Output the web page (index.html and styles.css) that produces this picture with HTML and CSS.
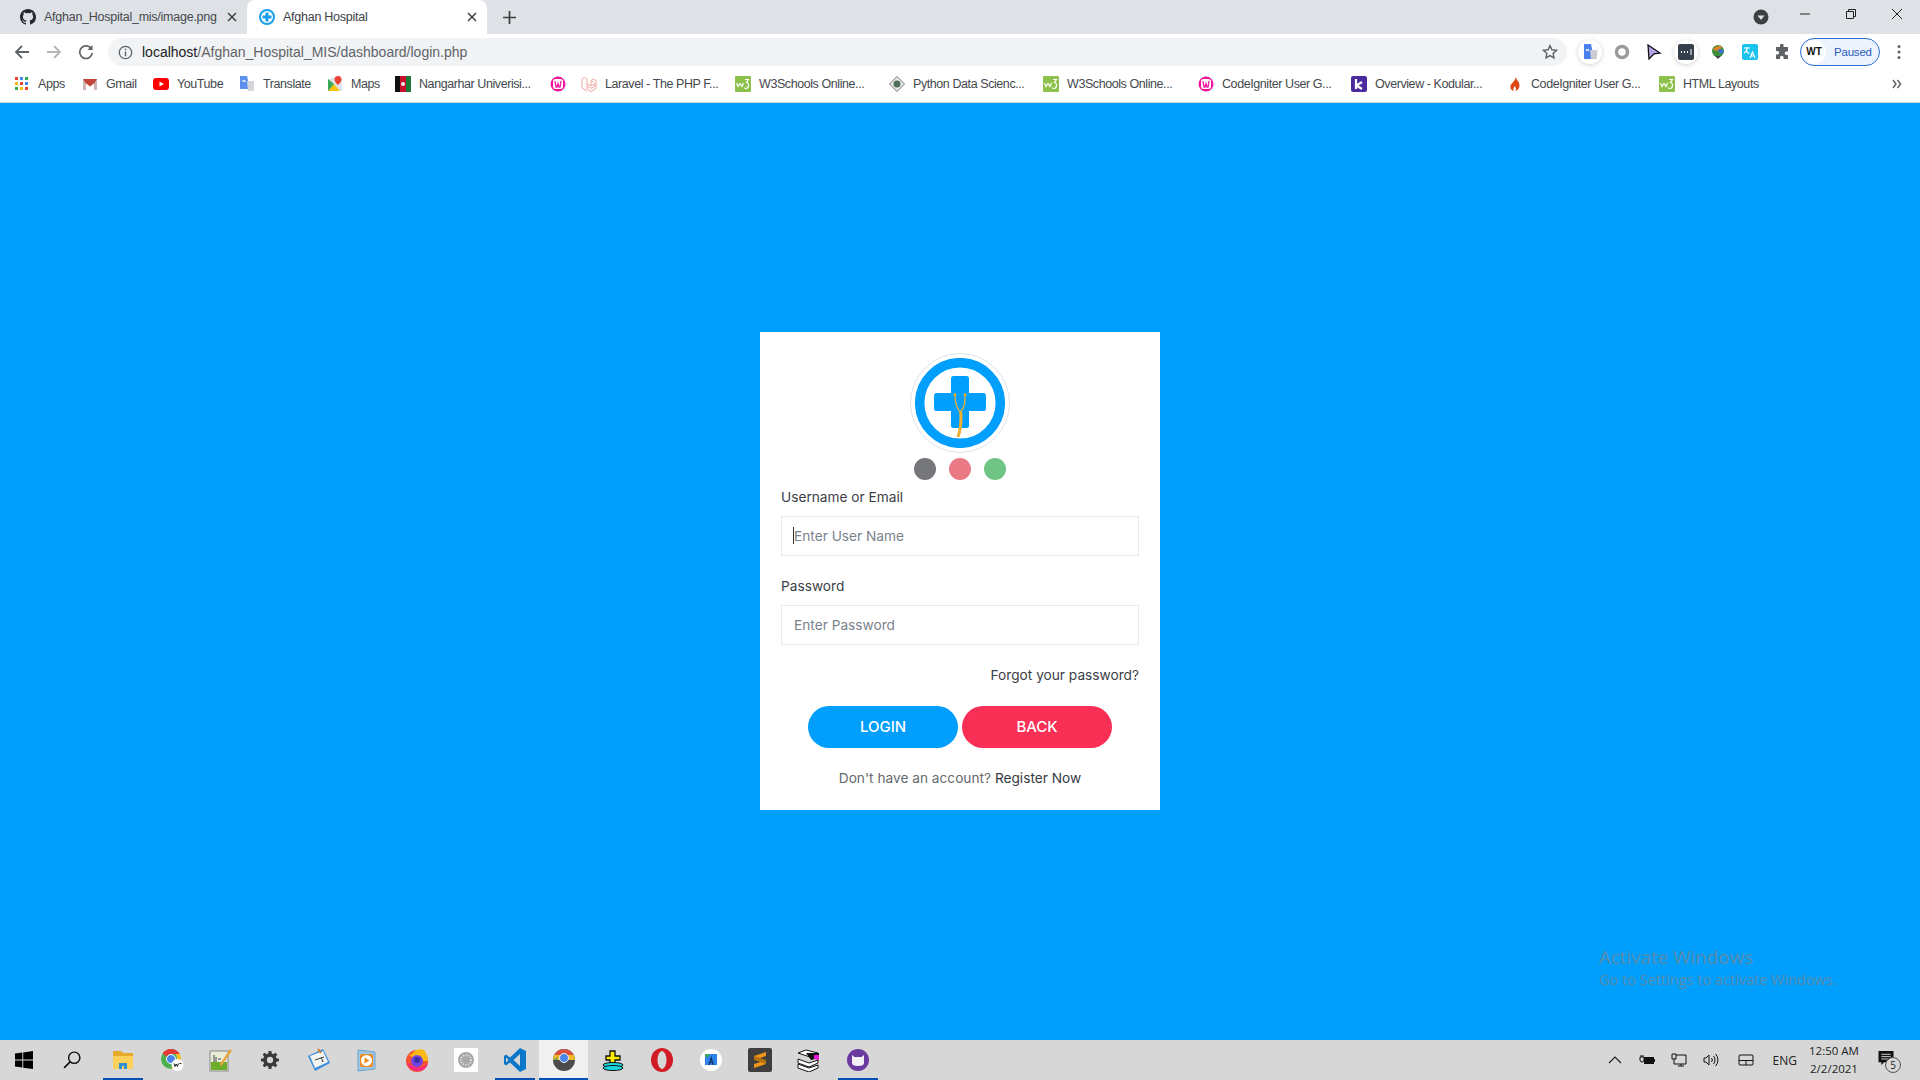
FILE: index.html
```html
<!DOCTYPE html>
<html lang="en">
<head>
    <meta charset="UTF-8">
    <meta name="viewport" content="width=device-width, initial-scale=1.0">
    <title>Afghan Hospital</title>
    <link rel="stylesheet" href="styles.css">
</head>
<body>
<svg class="sprites" width="0" height="0">
    <symbol id="ico-w3" viewBox="0 0 16 16">
        <rect width="16" height="16" rx="1" fill="#8cc14c"/>
        <path d="M1.500 7l1.500 3.500L5 7.500l2 3L8.500 7M10 3.500h3.500l-2 3c2.800 0 2.800 6-.5 6-.8 0-1.300-.3-1.700-.8" fill="none" stroke="#fff" stroke-width="1.200"/>
    </symbol>
    <symbol id="ico-wamp" viewBox="0 0 16 16">
        <circle cx="8" cy="8" r="7.500" fill="#f0169c"/>
        <rect x="3" y="3" width="10" height="10" rx="2.500" fill="#fff"/>
        <path d="M5 5l1 6h1l1-3.500L9 11h1l1-6" fill="none" stroke="#f0169c" stroke-width="1.300"/>
    </symbol>
    <symbol id="ico-close" viewBox="0 0 10 10">
        <path d="M1 1l8 8M9 1l-8 8" stroke="#3c4043" stroke-width="1.500" fill="none"/>
    </symbol>
    <symbol id="ico-logo-small" viewBox="0 0 16 16">
        <circle cx="8" cy="8" r="7" fill="#fff" stroke="#1a9fee" stroke-width="2"/>
        <path d="M6.500 3.500h3v3h3v3h-3v3h-3v-3h-3v-3h3z" fill="#1a9fee"/>
    </symbol>
</svg>

<div class="chrome">
    <div class="tabstrip">
        <div class="tab">
            <svg class="tab-ico" viewBox="0 0 16 16"><path fill="#24292e" d="M8 0C3.580 0 0 3.580 0 8c0 3.540 2.290 6.530 5.470 7.590.4.070.55-.17.55-.38v-1.340c-2.230.49-2.690-1.070-2.690-1.070-.36-.93-.89-1.170-.89-1.170-.73-.5.050-.49.050-.49.8.060 1.230.82 1.230.82.71 1.220 1.870.87 2.330.66.070-.52.28-.87.51-1.070-1.780-.2-3.640-.89-3.640-3.950 0-.87.31-1.590.82-2.150-.08-.2-.36-1.020.08-2.120 0 0 .67-.21 2.200.82a7.600 7.600 0 0 1 4 0c1.530-1.040 2.200-.82 2.200-.82.44 1.100.16 1.920.08 2.120.51.56.82 1.270.82 2.150 0 3.070-1.870 3.750-3.650 3.950.29.25.54.73.54 1.480v2.200c0 .21.15.46.55.38A8 8 0 0 0 16 8c0-4.420-3.580-8-8-8z"/></svg>
            <span class="tab-title">Afghan_Hospital_mis/image.png</span>
            <svg class="tab-close"><use href="#ico-close"/></svg>
        </div>
        <div class="tab tab-active">
            <svg class="tab-ico"><use href="#ico-logo-small"/></svg>
            <span class="tab-title">Afghan Hospital</span>
            <svg class="tab-close"><use href="#ico-close"/></svg>
        </div>
        <svg class="new-tab" viewBox="0 0 12 12"><path d="M6 0v12M0 6h12" stroke="#3c4043" stroke-width="1.600"/></svg>
        <svg class="tab-search" viewBox="0 0 16 16"><circle cx="8" cy="8" r="7.500" fill="#3c4043"/><path d="M4.500 6.500h7L8 11z" fill="#dee1e6"/></svg>
        <div class="win-btns">
            <svg viewBox="0 0 12 12"><path d="M1 6h10" stroke="#222" stroke-width="1"/></svg>
            <svg viewBox="0 0 12 12"><path d="M1.500 3.500h7v7h-7zM3.500 3.500v-2h7v7h-2" fill="none" stroke="#222" stroke-width="1"/></svg>
            <svg viewBox="0 0 12 12"><path d="M1 1l10 10M11 1L1 11" stroke="#222" stroke-width="1"/></svg>
        </div>
    </div>

    <div class="toolbar">
        <svg class="nav-ico" viewBox="0 0 16 16"><path d="M15 8H2M8 2L2 8l6 6" fill="none" stroke="#5f6368" stroke-width="1.800"/></svg>
        <svg class="nav-ico nav-off" viewBox="0 0 16 16"><path d="M1 8h13M8 2l6 6-6 6" fill="none" stroke="#b4b6b9" stroke-width="1.800"/></svg>
        <svg class="nav-ico" viewBox="0 0 16 16"><path d="M13.500 5A6.300 6.300 0 1 0 14.300 9" fill="none" stroke="#5f6368" stroke-width="1.700"/><path d="M14.500 1v5h-5z" fill="#5f6368"/></svg>
        <div class="omnibox">
            <svg class="info-ico" viewBox="0 0 16 16"><circle cx="8" cy="8" r="6.600" fill="none" stroke="#5f6368" stroke-width="1.400"/><path d="M8 7v5M8 4v1.600" stroke="#5f6368" stroke-width="1.500"/></svg>
            <span class="url"><b>localhost</b>/Afghan_Hospital_MIS/dashboard/login.php</span>
            <svg class="star-ico" viewBox="0 0 16 16"><path d="M8 1.600l1.900 4.200 4.600.5-3.400 3.100.9 4.500L8 11.600l-4 2.300.9-4.500L1.500 6.300l4.600-.5z" fill="none" stroke="#5f6368" stroke-width="1.400"/></svg>
        </div>
        <div class="extensions">
            <span class="ext ext-round"><svg viewBox="0 0 16 16"><path d="M2 0h7l3 15H2z" fill="#4a80ec"/><path d="M8 6h7v9H9z" fill="#c9ccd1"/><path d="M4 6h3" stroke="#fff" stroke-width="1.500"/></svg></span>
            <span class="ext"><svg viewBox="0 0 16 16"><circle cx="8" cy="8" r="5.500" fill="none" stroke="#9a9a9a" stroke-width="3.500"/></svg></span>
            <span class="ext"><svg viewBox="0 0 16 16"><path d="M2 1l12 8-6 .8L3 15z" fill="#b9a3e8" stroke="#111" stroke-width="1.300"/></svg></span>
            <span class="ext ext-round"><svg viewBox="0 0 16 16"><rect width="16" height="16" rx="2" fill="#333f4b"/><path d="M3 8h1M6 8h1M9 8h1" stroke="#fff" stroke-width="2"/><path d="M13 5v6" stroke="#fff"/></svg></span>
            <span class="ext"><svg viewBox="0 0 16 16"><circle cx="8" cy="7" r="6" fill="#3d8e3b"/><path d="M3 6c2-4 6-5 9-3l-3 4z" fill="#e6832a"/><path d="M8 5c3 0 6 1 6 3l-4 2z" fill="#3a6fd8"/><path d="M5 12l3 3 3-3z" fill="#444"/></svg></span>
            <span class="ext"><svg viewBox="0 0 16 16"><rect width="16" height="16" rx="2" fill="#19c3ee"/><path d="M2 4h6M5 3v1c0 2-1 4-3 5M4 6c.5 1.500 2 3 3.500 3.500" fill="none" stroke="#fff" stroke-width="1.200"/><path d="M8 14l2.500-6 2.500 6M9 12h3" fill="none" stroke="#fff" stroke-width="1.200"/></svg></span>
            <span class="ext"><svg viewBox="0 0 16 16"><path d="M6 1.500a1.800 1.800 0 0 1 3.600 0V3H14v4.400h-1.500a1.800 1.800 0 0 0 0 3.600H14v4H9.600v-1.500a1.800 1.800 0 0 0-3.600 0V15H2v-4.400h1.300a1.800 1.800 0 0 0 0-3.600H2V3h4z" fill="#5f6368"/></svg></span>
        </div>
        <div class="profile">
            <span class="avatar">WT</span>
            <span class="paused">Paused</span>
        </div>
        <svg class="menu-ico" viewBox="0 0 4 16"><circle cx="2" cy="2.500" r="1.500" fill="#5f6368"/><circle cx="2" cy="8" r="1.500" fill="#5f6368"/><circle cx="2" cy="13.500" r="1.500" fill="#5f6368"/></svg>
    </div>

    <div class="bookmarks">
        <div class="bm">
            <svg class="bm-ico bm-apps" viewBox="0 0 14 14">
                <path d="M0 0h3v3H0z" fill="#ea4335"/><path d="M5 0h3v3H5z" fill="#4285f4"/><path d="M10 0h3v3h-3z" fill="#34a853"/>
                <path d="M0 5h3v3H0z" fill="#fbbc05"/><path d="M5 5h3v3H5z" fill="#ea4335"/><path d="M10 5h3v3h-3z" fill="#4285f4"/>
                <path d="M0 10h3v3H0z" fill="#34a853"/><path d="M5 10h3v3H5z" fill="#fbbc05"/><path d="M10 10h3v3h-3z" fill="#ea4335"/>
            </svg>
            <span>Apps</span>
        </div>
        <div class="bm">
            <svg class="bm-ico" viewBox="0 0 16 16"><path d="M1 3h14v11h-2.500V7L8 10.500 3.500 7v7H1z" fill="#c5443a"/><path d="M1 3v11h2.500V7zM15 3v11h-2.500V7z" fill="#c9b8b4"/></svg>
            <span>Gmail</span>
        </div>
        <div class="bm">
            <svg class="bm-ico" viewBox="0 0 16 16"><rect y="2" width="16" height="12" rx="3" fill="#f00"/><path d="M6.500 5.500v5L11 8z" fill="#fff"/></svg>
            <span>YouTube</span>
        </div>
        <div class="bm">
            <svg class="bm-ico" viewBox="0 0 16 16"><path d="M1 0h7l3 13H1z" fill="#5c8fee"/><path d="M8 5h7v10H9z" fill="#d4d6da"/><path d="M3.500 5h3" stroke="#fff" stroke-width="1.500"/></svg>
            <span>Translate</span>
        </div>
        <div class="bm">
            <svg class="bm-ico" viewBox="0 0 16 16"><path d="M1 3l9-2 5 2v12H1z" fill="#dfe3e8"/><path d="M1 15l6-7 6 7z" fill="#f4c20d"/><path d="M1 3l6 5-6 7z" fill="#3aa757"/><path d="M11 0a3.500 3.500 0 0 1 3.500 3.500C14.500 6 11 9 11 9S7.500 6 7.500 3.500A3.500 3.500 0 0 1 11 0z" fill="#e94335"/></svg>
            <span>Maps</span>
        </div>
        <div class="bm">
            <svg class="bm-ico" viewBox="0 0 16 16"><path d="M0 0h5v16H0z" fill="#111"/><path d="M5 0h6v16H5z" fill="#c8102e"/><path d="M11 0h5v16h-5z" fill="#1a7a36"/><circle cx="8" cy="8" r="2" fill="#eee"/></svg>
            <span>Nangarhar Univerisi...</span>
        </div>
        <div class="bm">
            <svg class="bm-ico"><use href="#ico-wamp"/></svg>
        </div>
        <div class="bm">
            <svg class="bm-ico" viewBox="0 0 16 16"><path d="M1 3l2.500-1.500L6 3v7l4 2.300 4-2.300V7.500l-4 2.300L6.500 8M6 10v3l4 2.500 5-3V4.500L12.500 3 10 4.500 12.500 6M10 4.500v5.300M1 3v9l5 3" fill="none" stroke="#f4a79d" stroke-width="1"/></svg>
            <span>Laravel - The PHP F...</span>
        </div>
        <div class="bm">
            <svg class="bm-ico"><use href="#ico-w3"/></svg>
            <span>W3Schools Online...</span>
        </div>
        <div class="bm">
            <svg class="bm-ico" viewBox="0 0 16 16"><path d="M8 .5L15.500 8 8 15.500.5 8z" fill="#e8e8e8" stroke="#777"/><circle cx="8" cy="8" r="3.500" fill="#4f6e58"/></svg>
            <span>Python Data Scienc...</span>
        </div>
        <div class="bm">
            <svg class="bm-ico"><use href="#ico-w3"/></svg>
            <span>W3Schools Online...</span>
        </div>
        <div class="bm">
            <svg class="bm-ico"><use href="#ico-wamp"/></svg>
            <span>CodeIgniter User G...</span>
        </div>
        <div class="bm">
            <svg class="bm-ico" viewBox="0 0 16 16"><rect width="16" height="16" rx="2" fill="#4b2a9e"/><path d="M5 3v10M11 6L5.500 9.500 11 13" fill="none" stroke="#fff" stroke-width="2.200"/></svg>
            <span>Overview - Kodular...</span>
        </div>
        <div class="bm">
            <svg class="bm-ico" viewBox="0 0 16 16"><path d="M8.500 1c1 3 4 4.500 4 8.500 0 3-2 5-4.500 5.500 1.500-1.500 1.500-3-.5-5-.5 1.500-1.500 2-1 5C4 14.500 3 12 3.500 9.500 4 7.500 8.500 5 8.500 1z" fill="#dd4814"/></svg>
            <span>CodeIgniter User G...</span>
        </div>
        <div class="bm">
            <svg class="bm-ico"><use href="#ico-w3"/></svg>
            <span>HTML Layouts</span>
        </div>
        <svg class="bm-more" viewBox="0 0 10 10"><path d="M1 1l3 4-3 4M5.500 1l3 4-3 4" fill="none" stroke="#5f6368" stroke-width="1.500"/></svg>
    </div>
</div>

<main class="page">
    <div class="login-card">
        <div class="logo">
            <svg viewBox="0 0 90 90" width="90" height="90">
                <circle cx="45" cy="45" r="40.300" fill="#fff" stroke="#009efd" stroke-width="9.500"/>
                <path d="M38.500 18h13a2.500 2.500 0 0 1 2.500 2.500V35h14.500a2.500 2.500 0 0 1 2.500 2.500v13a2.500 2.500 0 0 1-2.500 2.500H54v14.500a2.500 2.500 0 0 1-2.500 2.500h-13a2.500 2.500 0 0 1-2.500-2.500V53H21.500a2.500 2.500 0 0 1-2.500-2.500v-13a2.500 2.500 0 0 1 2.500-2.500H36V20.500a2.500 2.500 0 0 1 2.500-2.500z" fill="#009efd"/>
                <path d="M40 36.500c0 8 .8 13 5.300 17.500 4.500-4.500 4.700-9.500 4.700-17.500" fill="none" stroke="#f2b02e" stroke-width="1.300"/>
                <path d="M45.800 54c.5 9 .5 17-3 25" fill="none" stroke="#f2b02e" stroke-width="3"/>
                <circle cx="40" cy="36.500" r="1.300" fill="#f2b02e"/><circle cx="50" cy="36.500" r="1.300" fill="#f2b02e"/>
            </svg>
        </div>
        <div class="dots">
            <span class="dot dot-gray"></span>
            <span class="dot dot-red"></span>
            <span class="dot dot-green"></span>
        </div>
        <form class="login-form">
            <label class="field">
                <span class="field-label">Username or Email</span>
                <span class="input-wrap">
                    <input type="text" placeholder="Enter User Name">
                    <span class="caret"></span>
                </span>
            </label>
            <label class="field">
                <span class="field-label">Password</span>
                <span class="input-wrap">
                    <input type="password" placeholder="Enter Password">
                </span>
            </label>
            <a class="forgot">Forgot your password?</a>
            <div class="buttons">
                <button type="button" class="btn btn-login">LOGIN</button>
                <button type="button" class="btn btn-back">BACK</button>
            </div>
            <p class="register">Don't have an account? <a>Register Now</a></p>
        </form>
    </div>

    <div class="activate">
        <div class="activate-title">Activate Windows</div>
        <div class="activate-sub">Go to Settings to activate Windows.</div>
    </div>
</main>

<footer class="taskbar">
    <div class="task task-start"><svg viewBox="0 0 16 16"><path d="M0 2.300l6.500-.9v6.200H0zM7.300 1.300L16 0v7.600H7.300zM0 8.400h6.500v6.200L0 13.700zM7.300 8.400H16V16l-8.700-1.200z" fill="#000"/></svg></div>
    <div class="task task-search"><svg viewBox="0 0 16 16"><circle cx="10" cy="6" r="5" fill="none" stroke="#111" stroke-width="1.300"/><path d="M6.300 9.700L1 15" stroke="#111" stroke-width="1.500"/></svg></div>
    <div class="task task-open"><svg class="big" viewBox="0 0 24 24"><path d="M2 3h8l2 2h10v15a1 1 0 0 1-1 1H3a1 1 0 0 1-1-1z" fill="#e9a92c"/><path d="M2 8h20v12a1 1 0 0 1-1 1H3a1 1 0 0 1-1-1z" fill="#fbd15b"/><path d="M8 21v-6h8v6h-3v-3h-2v3z" fill="#2d8fd5"/></svg></div>
    <div class="task"><svg class="big" viewBox="0 0 24 24"><circle cx="11" cy="11" r="10" fill="#4caf50"/><path d="M11 1a10 10 0 0 1 8.700 5H11a5 5 0 0 0-4.300 2.500L2.500 5.500A10 10 0 0 1 11 1z" fill="#e53935"/><path d="M19.700 6A10 10 0 0 1 11 21l4.300-7.500A5 5 0 0 0 15.300 6z" fill="#fbc02d"/><circle cx="11" cy="11" r="4.500" fill="#4a86e8" stroke="#fff"/><circle cx="17.500" cy="17" r="6" fill="#fff"/><path d="M14 15.500l1 3 1.200-2.500 1.200 2.500 1-3M19.500 15.500h2" stroke="#222" fill="none"/></svg></div>
    <div class="task"><svg class="big" viewBox="0 0 24 24"><rect x="1" y="3" width="18" height="20" fill="#e8ecd9" stroke="#888"/><rect x="2" y="14" width="16" height="8" fill="#6cae29"/><path d="M5 7v7M7 9v5M9 11h3" stroke="#444"/><path d="M21 1l2 1.500L13 17l-2 1 .3-2.500z" fill="#e8a33a"/></svg></div>
    <div class="task"><svg viewBox="0 0 20 20"><path d="M8.500 0h3l.5 2.800 1.700.7 2.300-1.600 2.100 2.100-1.600 2.300.7 1.700 2.800.5v3l-2.800.5-.7 1.700 1.600 2.300-2.100 2.100-2.300-1.600-1.700.7-.5 2.800h-3L8 17.200l-1.700-.7L4 18.100 1.900 16l1.600-2.300-.7-1.700L0 11.500v-3L2.800 8l.7-1.700L1.900 4 4 1.900l2.300 1.600L8 2.800zM10 6.500a3.500 3.500 0 1 0 0 7 3.500 3.500 0 0 0 0-7z" fill="#3a3a3a"/></svg></div>
    <div class="task"><svg class="big" viewBox="0 0 24 24"><path d="M1 8L16 1l7 14-15 8z" fill="#3a8fe0"/><path d="M3 8l13-5 5 11-13 6z" fill="#f4f4f0"/><path d="M8 12l9-3M14 9l2 5-1-2" stroke="#444" fill="none"/><path d="M11 1l3 4" stroke="#d9792e" stroke-width="2"/></svg></div>
    <div class="task"><svg class="big" viewBox="0 0 24 24"><path d="M2 2l17 2v17l-17 2z" fill="#9cc7e6" stroke="#6ea4cc"/><rect x="4" y="6" width="13" height="13" fill="#f28a1f" rx="2"/><circle cx="10.500" cy="12.500" r="5.500" fill="#fff"/><path d="M8.500 9.500v6l5-3z" fill="#f28a1f"/></svg></div>
    <div class="task"><svg class="big" viewBox="0 0 24 24"><circle cx="12" cy="13" r="11" fill="#f6502d"/><path d="M3 6c2 1 3 1 4 0 2-4 8-6 12-4 2 2 4 7 4 11H12z" fill="#fcb913"/><circle cx="12" cy="13" r="6" fill="#7542e5"/><circle cx="12" cy="12" r="3" fill="#3a2fa5"/><path d="M2 14c1 6 6 9 11 9 5 0 9-3 10-8-3 4-8 5-12 4-4-1-7-3-9-5z" fill="#f32a7e"/></svg></div>
    <div class="task"><svg class="big" viewBox="0 0 24 24"><rect width="24" height="24" fill="#fff"/><circle cx="12" cy="12" r="8" fill="#a8a8a8"/><circle cx="12" cy="12" r="5" fill="none" stroke="#e8e8e8" stroke-dasharray="1 1.500" stroke-width="2"/></svg></div>
    <div class="task task-open"><svg class="big" viewBox="0 0 24 24"><path d="M17 0l6 3v18l-6 3L7 14.500l-4 3-2-1.500V8l2-1.500 4 3z" fill="#0a78c9"/><path d="M17 6l-6.500 6 6.500 6z" fill="#d6d7d6"/><path d="M3 9.500L5.500 12 3 14.500z" fill="#d6d7d6"/></svg></div>
    <div class="task task-open task-active"><svg class="big" viewBox="0 0 24 24"><circle cx="12" cy="12" r="11" fill="#4b4b4b"/><path d="M12 1a11 11 0 0 1 9.800 6H2.200A11 11 0 0 1 12 1z" fill="#d9503f"/><path d="M21.800 7A11 11 0 0 1 23 12H1a11 11 0 0 1 1.200-5z" fill="#f2b824"/><path d="M1 12h4l1-3z" fill="#58a55c"/><circle cx="12" cy="10" r="4.500" fill="#4a86e8" stroke="#eee"/></svg></div>
    <div class="task"><svg class="big" viewBox="0 0 24 24"><path d="M9 3h5v5h5v4h-5v3H9v-3H5V8h4z" fill="#ffec00" stroke="#111" stroke-width="1.300"/><ellipse cx="12" cy="17" rx="10" ry="2.500" fill="#19d8df" stroke="#111"/><ellipse cx="12" cy="20" rx="10" ry="2.500" fill="#19d8df" stroke="#111"/></svg></div>
    <div class="task"><svg class="big" viewBox="0 0 24 24"><ellipse cx="12" cy="12" rx="11" ry="12" fill="#d21c25"/><ellipse cx="12" cy="12" rx="4.500" ry="9" fill="#d6d7d6"/></svg></div>
    <div class="task"><svg class="big" viewBox="0 0 24 24"><circle cx="12" cy="12" r="11" fill="#fff"/><path d="M6 6h12v11H6z" fill="#2f82ec"/><path d="M6 6h5l-2 3H6z" fill="#3aa757"/><path d="M10 17l2.200-7 2.200 7M11 14.500h2.500" stroke="#10305f" stroke-width="1.200" fill="none"/></svg></div>
    <div class="task"><svg class="big" viewBox="0 0 24 24"><rect width="24" height="24" rx="2" fill="#3e3e3e"/><path d="M18 4L6 8v4l12-4zM18 12L6 16v4l12-4z" fill="#f09617"/><path d="M6 8v4l12 4v-4z" fill="#b5700f"/></svg></div>
    <div class="task"><svg class="big" viewBox="0 0 24 24"><path d="M1 5l8-3 12 3-8 4z" fill="#fff" stroke="#111"/><path d="M9 5h13v5l-8 2z" fill="#111"/><path d="M17 7h5v5l-5-1z" fill="#f013d8"/><path d="M1 11l11 4 9-3v3l-9 4-11-4zM1 16l11 4 9-3v3l-9 4-11-4z" fill="#fff" stroke="#111"/></svg></div>
    <div class="task task-open"><svg class="big" viewBox="0 0 24 24"><circle cx="12" cy="12" r="11" fill="#6b3aa0"/><path d="M6 7l2.500 2h7L18 7v8c0 2-2 3-6 3s-6-1-6-3z" fill="#f2eff6"/></svg></div>

    <div class="tray">
        <svg class="tray-ico" viewBox="0 0 16 16"><path d="M2 11l6-6 6 6" fill="none" stroke="#222" stroke-width="1.200"/></svg>
        <svg class="tray-ico" viewBox="0 0 16 16"><path d="M5 5h10v7H5z" fill="#111"/><path d="M15 7h1v3h-1z" fill="#111"/><path d="M1 5v3a2 2 0 0 0 4 0V5zM2 5V3M4 5V3" fill="none" stroke="#111"/></svg>
        <svg class="tray-ico" viewBox="0 0 16 16"><path d="M5 3h10v9H5M10 12v2M7 14h6M1 2h4v5H1zM3 7v5h2" fill="none" stroke="#111"/></svg>
        <svg class="tray-ico tray-ico-wide" viewBox="0 0 16 16"><path d="M1 6v4h2l3 3V3L3 6zM8.500 6a3 3 0 0 1 0 4M10.500 4a6 6 0 0 1 0 8M12.500 2a8.500 8.500 0 0 1 0 12" fill="none" stroke="#111"/></svg>
        <svg class="tray-ico" viewBox="0 0 16 16"><rect x="1" y="3" width="14" height="10" rx="1" fill="none" stroke="#111"/><path d="M1 8.500h14M8 8.500V13" stroke="#111"/></svg>
        <span class="lang">ENG</span>
        <div class="clock"><span>12:50 AM</span><span>2/2/2021</span></div>
        <div class="notify">
            <svg viewBox="0 0 16 16"><path d="M0 0h16v12H6l-3 3v-3H0z" fill="#111"/><path d="M3 3.500h10M3 6h10M3 8.500h7" stroke="#d6d7d6"/></svg>
            <span class="notify-count">5</span>
        </div>
    </div>
</footer>
</body>
</html>
```

FILE: styles.css
```css
* {
    box-sizing: border-box;
}
html, body {
    height: 100%;
}
body {
    margin: 0;
    display: flex;
    flex-direction: column;
    height: 1080px;
    overflow: hidden;
    font-family: 'Liberation Sans', Arial, sans-serif;
    background-color: #009efd;
    color: #333;
}
.sprites {
    position: absolute;
}

/* browser chrome */
.chrome {
    flex: none;
    background-color: #fff;
}
.tabstrip {
    display: flex;
    align-items: center;
    height: 34px;
    background-color: #dee1e6;
}
.tab {
    display: flex;
    align-items: center;
    width: 247px;
    height: 34px;
    padding-left: 20px;
    font-size: 12.5px;
    letter-spacing: -0.25px;
    color: #45494d;
}
.tab-active {
    width: 240px;
    padding-left: 12px;
    background-color: #fff;
    border-radius: 8px 8px 0 0;
    color: #3c4043;
}
.tab-ico {
    flex: none;
    width: 16px;
    height: 16px;
    margin-right: 8px;
}
.tab-title {
    flex: 1;
    overflow: hidden;
    white-space: nowrap;
}
.tab-close {
    flex: none;
    width: 10px;
    height: 10px;
    margin: 0 10px 0 8px;
}
.new-tab {
    flex: none;
    width: 13px;
    height: 13px;
    margin-left: 16px;
}
.tab-search {
    flex: none;
    width: 16px;
    height: 16px;
    margin-left: auto;
}
.win-btns {
    display: flex;
    align-items: center;
    gap: 34px;
    height: 28px;
    margin: 0 17px 6px 30px;
}
.win-btns svg {
    width: 12px;
    height: 12px;
}
.toolbar {
    display: flex;
    align-items: center;
    height: 36px;
    padding-left: 14px;
}
.nav-ico {
    flex: none;
    width: 16px;
    height: 16px;
    margin-right: 16px;
}
.omnibox {
    flex: none;
    display: flex;
    align-items: center;
    width: 1459px;
    height: 28px;
    margin-left: -2px;
    padding: 0 10px;
    border-radius: 14px;
    background-color: #f1f3f4;
}
.info-ico {
    flex: none;
    width: 15px;
    height: 15px;
}
.url {
    flex: 1;
    margin-left: 9px;
    font-size: 14px;
    color: #5f6368;
}
.url b {
    font-weight: 400;
    color: #202124;
}
.star-ico {
    flex: none;
    width: 16px;
    height: 16px;
    margin-right: -1px;
}
.extensions {
    display: flex;
    align-items: center;
    gap: 16px;
    margin-left: 15px;
}
.ext {
    display: flex;
    align-items: center;
    justify-content: center;
    width: 16px;
    height: 16px;
}
.ext svg {
    width: 16px;
    height: 16px;
}
.ext-round {
    border-radius: 50%;
    box-shadow: 0 0 0 4px #fff, 0 1px 5px 4px rgba(0,0,0,0.18);
}
.profile {
    flex: none;
    display: flex;
    align-items: center;
    width: 80px;
    height: 28px;
    margin-left: 10px;
    border: 1px solid #2f6fd6;
    border-radius: 14px;
    background-color: #edf3fd;
}
.avatar {
    width: 24px;
    height: 24px;
    margin-left: 1px;
    border-radius: 50%;
    background-color: #fff;
    font-size: 10px;
    font-weight: 700;
    line-height: 24px;
    text-align: center;
    color: #111;
}
.paused {
    margin-left: 8px;
    font-size: 11.5px;
    letter-spacing: -0.2px;
    color: #2c5cc0;
}
.menu-ico {
    flex: none;
    width: 4px;
    height: 16px;
    margin-left: 17px;
}
.bookmarks {
    display: grid;
    grid-template-columns: 67px 71px 86px 88px 68px 155px 31px 154px 154px 154px 155px 153px 156px 152px 234px 10px;
    align-items: center;
    height: 33px;
    padding: 0 0 4px 15px;
    border-bottom: 1px solid #d3d6da;
    font-size: 12.5px;
    letter-spacing: -0.42px;
    color: #45494d;
}
.bm {
    display: flex;
    align-items: center;
    white-space: nowrap;
}
.bm-ico {
    flex: none;
    width: 16px;
    height: 16px;
    margin-right: 8px;
}
.bm-apps {
    width: 14px;
    height: 14px;
    margin-right: 9px;
}
.bm-more {
    width: 10px;
    height: 10px;
    margin-left: -1px;
}

/* login page */
.page {
    position: relative;
    flex: 1;
    display: flex;
    align-items: flex-start;
    justify-content: center;
    padding-top: 229px;
    background-color: #009efd;
}
.login-card {
    display: flex;
    flex-direction: column;
    align-items: center;
    width: 400px;
    height: 478px;
    padding: 21px 21px 0;
    background-color: #fff;
}
.logo {
    display: flex;
    align-items: center;
    justify-content: center;
    width: 100px;
    height: 100px;
    border: 1px solid #dee2e6;
    border-radius: 50%;
}
.dots {
    display: flex;
    gap: 13px;
    margin-top: 5px;
}
.dot {
    width: 22px;
    height: 22px;
    border-radius: 50%;
}
.dot-gray {
    background-color: #75777b;
}
.dot-red {
    background-color: #e97a86;
}
.dot-green {
    background-color: #6fc583;
}
.login-form {
    display: flex;
    flex-direction: column;
    width: 100%;
    margin-top: 7px;
    font-family: Inter, 'Liberation Sans', sans-serif;
    font-size: 13.7px;
}
.field {
    display: block;
    margin-bottom: 20px;
}
.field-label {
    display: block;
    height: 20px;
    margin-bottom: 9px;
    line-height: 20px;
    color: #3b4046;
}
.input-wrap {
    position: relative;
    display: block;
}
.input-wrap input {
    display: block;
    width: 100%;
    height: 40px;
    padding: 0 12px;
    border: 1px solid #e8e9ea;
    border-radius: 0;
    outline: none;
    background-color: #fff;
    font: inherit;
}
.input-wrap input::placeholder {
    color: #7a828b;
    opacity: 1;
}
.caret {
    position: absolute;
    left: 12px;
    top: 11px;
    width: 1px;
    height: 17px;
    background-color: #333;
}
.forgot {
    align-self: flex-end;
    line-height: 20px;
    color: #3b4046;
}
.buttons {
    display: flex;
    justify-content: center;
    gap: 4px;
    margin-top: 21px;
}
.btn {
    width: 150px;
    height: 42px;
    padding: 0 0 2px;
    border: 0;
    border-radius: 21px;
    font-family: inherit;
    font-size: 15px;
    font-weight: 500;
    color: #fff;
}
.btn-login {
    background-color: #009efd;
}
.btn-back {
    background-color: #f92f55;
}
.register {
    margin: 20px 0 0;
    line-height: 20px;
    text-align: center;
    color: #666a6e;
}
.register a {
    color: #343a40;
}
.activate {
    position: absolute;
    left: 1599px;
    top: 842px;
    font-family: 'Open Sans', sans-serif;
    color: #5a8cab;
}
.activate-title {
    font-size: 18.8px;
    line-height: 24px;
}
.activate-sub {
    font-size: 14.5px;
    line-height: 21px;
}

/* windows taskbar */
.taskbar {
    flex: none;
    display: flex;
    align-items: stretch;
    height: 40px;
    background-color: #d6d7d6;
}
.task {
    flex: none;
    display: flex;
    align-items: center;
    justify-content: center;
    width: 49px;
    position: relative;
}
.task svg {
    width: 18px;
    height: 18px;
}
.task svg.big {
    width: 24px;
    height: 24px;
}
.task-start svg {
    margin-right: 2px;
}
.task-search svg {
    margin-right: 4px;
}
.task-open::after {
    content: "";
    position: absolute;
    left: 5px;
    right: 4px;
    bottom: 0;
    height: 2px;
    background-color: #0050b5;
}
.task-active {
    background-color: #eff0ef;
}
.task-active::after {
    left: 0;
    right: 0;
}
.tray {
    display: flex;
    align-items: center;
    margin-left: auto;
    color: #222;
}
.tray-ico {
    flex: none;
    width: 16px;
    height: 16px;
    margin-right: 16px;
}
.tray-ico-wide {
    margin-right: 19px;
}
.lang {
    margin: 0 7px 0 3px;
    font-family: 'Open Sans', sans-serif;
    font-size: 12px;
}
.clock {
    display: flex;
    flex-direction: column;
    align-items: center;
    width: 60px;
    font-family: 'Open Sans', sans-serif;
    font-size: 11.5px;
    line-height: 18px;
}
.notify {
    position: relative;
    width: 18px;
    height: 18px;
    margin: 0 24px 0 14px;
}
.notify svg {
    width: 16px;
    height: 15px;
}
.notify-count {
    position: absolute;
    left: 7px;
    top: 6px;
    width: 16px;
    height: 16px;
    border: 1px solid #555;
    border-radius: 50%;
    background-color: #d6d7d6;
    font-family: 'Open Sans', sans-serif;
    font-size: 10px;
    line-height: 14px;
    text-align: center;
}
```
